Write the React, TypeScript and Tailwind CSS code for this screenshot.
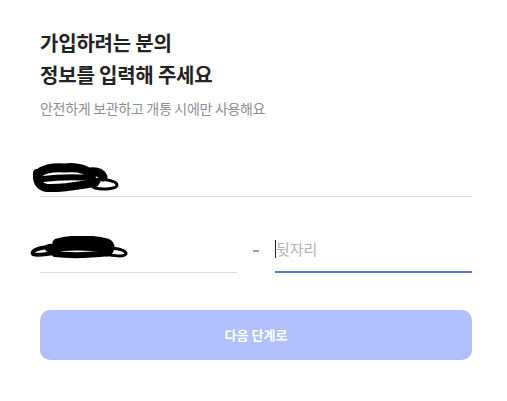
import React from "react";

function Scribble1() {
  return (
    <svg width="90" height="32" viewBox="0 0 90 32" className="block">
      <path d="M5 12 C8 6, 20 4, 32 5 C40 4, 50 5, 55 9 C62 8, 68 9, 70 14" stroke="#000" strokeWidth="9" fill="none" strokeLinecap="round" />
      <path d="M4 10 C3 18, 6 24, 14 25 C30 26, 48 22, 62 20" stroke="#000" strokeWidth="8" fill="none" strokeLinecap="round" />
      <path d="M10 16 C25 14, 45 14, 60 15" stroke="#000" strokeWidth="6" fill="none" strokeLinecap="round" />
      <path d="M60 17 C70 15, 84 18, 84 22 C84 26, 70 27, 62 25 C58 24, 60 20, 66 19" stroke="#000" strokeWidth="3" fill="none" strokeLinecap="round" />
    </svg>
  );
}

function Scribble2() {
  return (
    <svg width="104" height="26" viewBox="0 0 104 26" className="block">
      <path d="M30 7 C45 3, 65 3, 80 7 C84 9, 84 13, 80 16" stroke="#000" strokeWidth="9" fill="none" strokeLinecap="round" />
      <path d="M22 12 C40 10, 60 10, 80 12" stroke="#000" strokeWidth="8" fill="none" strokeLinecap="round" />
      <path d="M28 18 C45 20, 65 19, 82 17" stroke="#000" strokeWidth="6" fill="none" strokeLinecap="round" />
      <path d="M22 11 C10 12, 4 15, 6 18 C10 20, 22 18, 32 16" stroke="#000" strokeWidth="4" fill="none" strokeLinecap="round" />
      <path d="M80 12 C92 12, 100 15, 99 18 C97 21, 86 20, 78 18" stroke="#000" strokeWidth="3" fill="none" strokeLinecap="round" />
    </svg>
  );
}

export default function App() {
  return (
    <div
      className="w-[507px] h-[401px] bg-white"
      style={{ fontFamily: '"Noto Sans CJK KR", "Noto Sans", sans-serif' }}
    >
      <div className="pt-[27px] pl-[40px] pr-[35px] flex flex-col">
        <h1 className="text-[20px] leading-[32px] font-bold text-[#222222] tracking-[-0.2px]">
          가입하려는 분의
          <br />
          정보를 입력해 주세요
        </h1>
        <p className="mt-[7px] text-[14px] leading-[20px] text-[#8b8f96] tracking-[-0.3px]">
          안전하게 보관하고 개통 시에만 사용해요
        </p>

        <div className="mt-[38px] h-[41px] border-b border-[#dcdcdc] flex items-center">
          <div className="-ml-[7px] mt-[5px]">
            <Scribble1 />
          </div>
        </div>

        <div className="mt-[35px] flex items-end">
          <div className="w-[197px] h-[41px] border-b border-[#dcdcdc] flex items-center">
            <div className="-ml-[13px] -mt-[6px]">
              <Scribble2 />
            </div>
          </div>
          <div className="w-[38px] h-[41px] flex items-center justify-center pb-[4px]">
            <div className="w-[6px] h-[2px] bg-[#a0a4aa]" />
          </div>
          <div className="flex-1 h-[41px] border-b-2 border-[#5b77d8] flex items-center pb-[6px]">
            <span className="w-[1px] h-[18px] bg-[#222]" />
            <span className="text-[15px] text-[#b3b3b3] leading-none">뒷자리</span>
          </div>
        </div>

        <button className="mt-[37px] h-[50px] w-full rounded-[10px] bg-[#afc0fd] text-white text-[13px] font-bold flex items-center justify-center">
          다음 단계로
        </button>
      </div>
    </div>
  );
}
